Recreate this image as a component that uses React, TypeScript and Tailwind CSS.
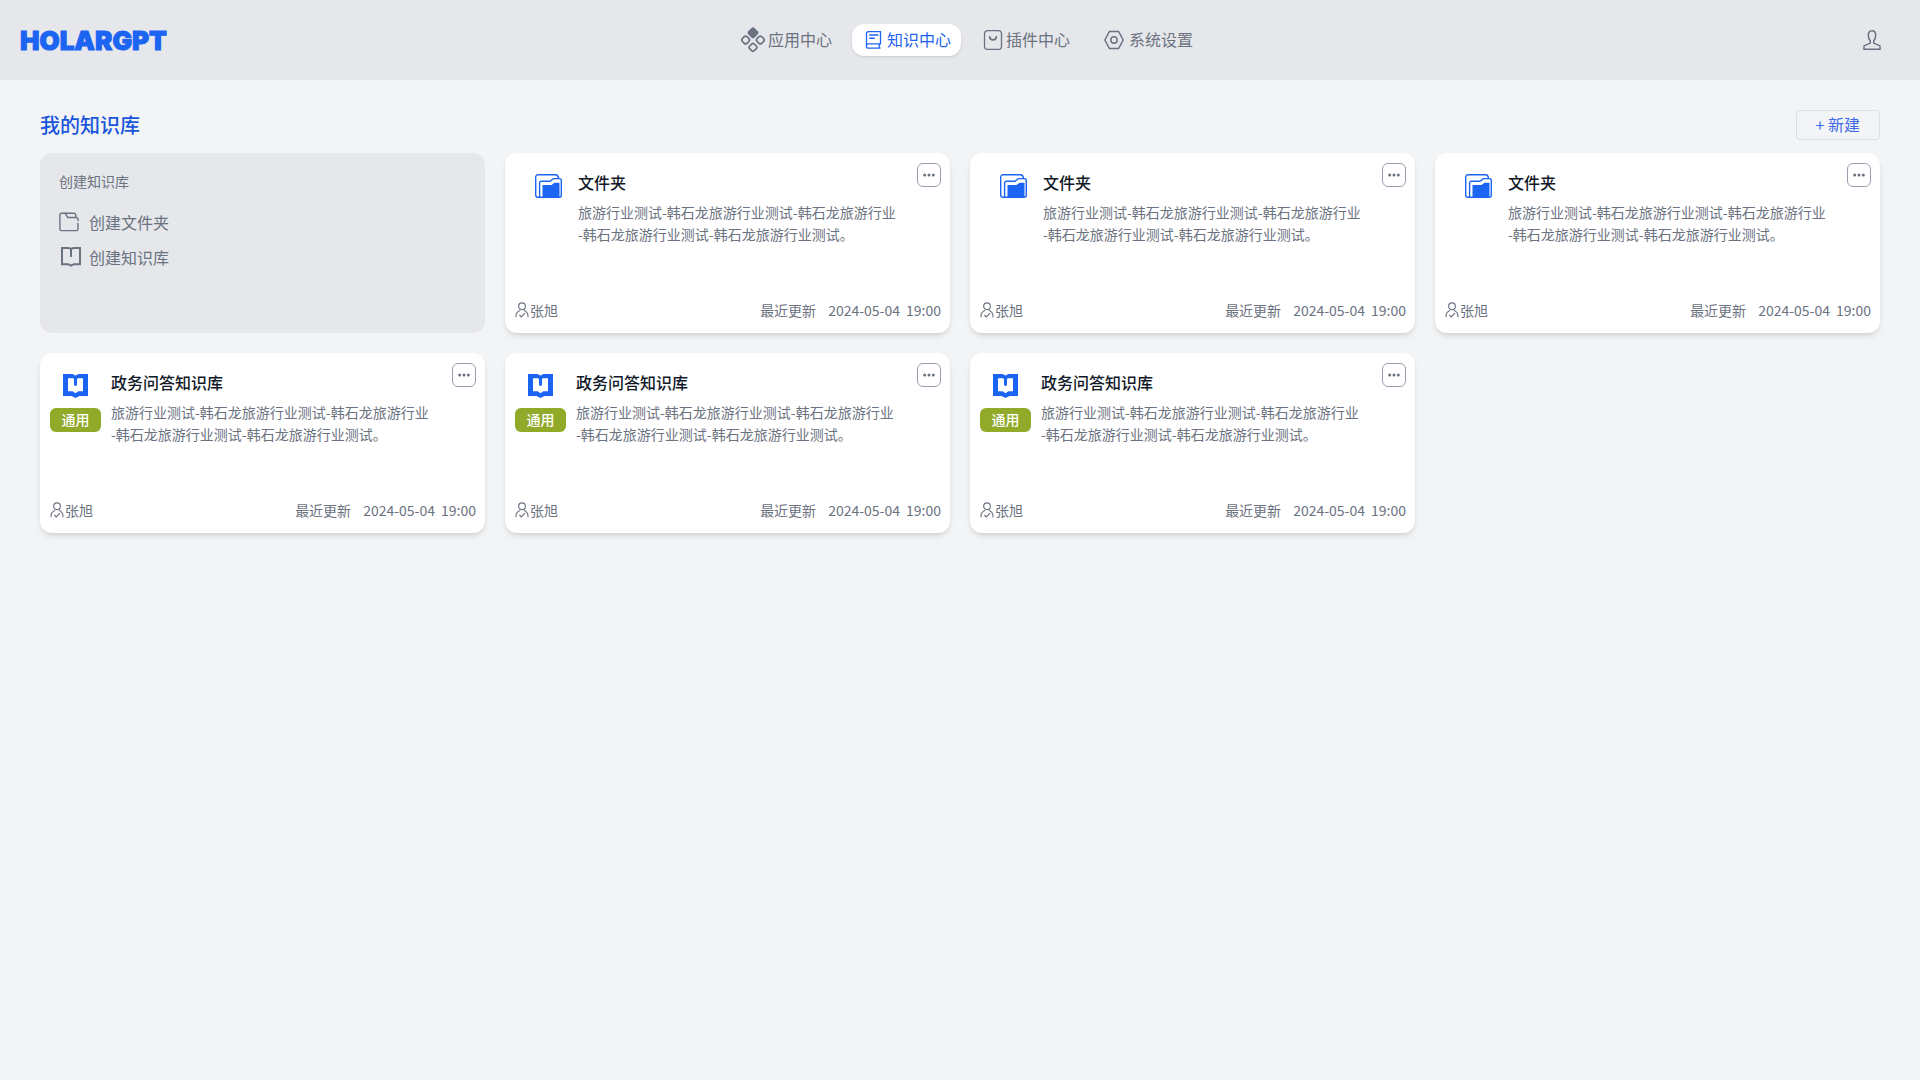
import React from "react";

type IconProps = { className?: string };

const DESC_LINES = [
  "旅游行业测试-韩石龙旅游行业测试-韩石龙旅游行业",
  "-韩石龙旅游行业测试-韩石龙旅游行业测试。",
];

const AppsIcon = ({ className }: IconProps) => (
  <svg viewBox="0 0 24 24" fill="none" stroke="currentColor" strokeWidth="1.4" className={className}>
    <rect x="8.9" y="2.7" width="6.2" height="6.2" rx="1" transform="rotate(45 12 5.8)" fill="currentColor" />
    <rect x="2.9" y="9.2" width="5.6" height="5.6" rx="1.6" transform="rotate(45 5.7 12)" />
    <rect x="15.5" y="9.2" width="5.6" height="5.6" rx="1.6" transform="rotate(45 18.3 12)" />
    <rect x="9.2" y="15.5" width="5.6" height="5.6" rx="1.6" transform="rotate(45 12 18.3)" />
  </svg>
);

const NotebookIcon = ({ className }: IconProps) => (
  <svg viewBox="0 0 24 24" fill="none" stroke="currentColor" strokeWidth="1.3" className={className}>
    <path d="M18.5 15.9V3.7H6.2a1.7 1.7 0 0 0-1.7 1.7v13.3a1.4 1.4 0 0 0 1.4 1.4h12.6" />
    <path d="M19 15.9H6a1.7 1.7 0 0 0-1.5 1.8M18 15.9a2.8 2.8 0 0 0 0 4.2" />
    <path d="M7.3 7h9.2M7.3 10.3h5.5" strokeWidth="1.5" />
  </svg>
);

const PluginIcon = ({ className }: IconProps) => (
  <svg viewBox="0 0 24 24" fill="none" stroke="currentColor" strokeWidth="1.3" className={className}>
    <rect x="3.5" y="2.6" width="17" height="18.8" rx="3.2" />
    <path d="M8.7 8.8c.3 4.2 6.3 4.2 6.6 0" strokeWidth="1.7" strokeLinecap="round" />
  </svg>
);

const HexIcon = ({ className }: IconProps) => (
  <svg viewBox="0 0 24 24" fill="none" stroke="currentColor" strokeWidth="1.5" className={className}>
    <path d="M7.3 3.6h9.4L21.2 12l-4.5 8.4H7.3L2.8 12z" strokeLinejoin="round" />
    <circle cx="12" cy="12" r="3.2" />
  </svg>
);

const UserIcon = ({ className }: IconProps) => (
  <svg viewBox="0 0 20 22" fill="none" stroke="currentColor" strokeWidth="1.5" className={className}>
    <path d="M10 1.7c-2.6 0-3.7 1.8-3.7 4.4 0 2.4.5 4.2 2 6v2L2 16.9v3.4h16v-3.4l-6.3-2.8v-2c1.5-1.8 2-3.6 2-6 0-2.6-1.1-4.4-3.7-4.4z" />
  </svg>
);

const FolderLineIcon = ({ className }: IconProps) => (
  <svg viewBox="0 0 20 20" fill="none" stroke="currentColor" strokeWidth="1.4" className={className}>
    <path d="M19 10.8v6.1a1.7 1.7 0 0 1-1.7 1.7H2.6a1.7 1.7 0 0 1-1.7-1.7V3a1.7 1.7 0 0 1 1.7-1.7h3.7l2.3 4.2h8.7A1.7 1.7 0 0 1 19 7.2v1.7" />
    <path d="M6.3 1.3h8.5a2 2 0 0 1 2 2v2.2" />
  </svg>
);

const BookLineIcon = ({ className }: IconProps) => (
  <svg viewBox="0 0 20 20" fill="none" stroke="currentColor" strokeWidth="2" className={className}>
    <path d="M1 1h6.2c1.4 0 2.4.6 2.8 1.5.4-.9 1.4-1.5 2.8-1.5H19v16.2h-6.2L10 18.7l-2.8-1.5H1z" />
    <path d="M10 2.4V10" />
  </svg>
);

const FolderIcon = ({ className }: IconProps) => (
  <svg viewBox="0 0 27 24" fill="none" stroke="currentColor" strokeWidth="1.4" className={className}>
    <path d="M4.5 23.3H3A2.3 2.3 0 0 1 .7 21V3A2.3 2.3 0 0 1 3 .7h17.7c1.7 0 2.5 1.3 2.8 3.5" />
    <path d="M4.6 23.3V9a1.8 1.8 0 0 1 1.8-1.8h8.4l3.7-2.6h5.8a2 2 0 0 1 2 2v14.7a2 2 0 0 1-2 2H4.6z" />
    <path d="M7.5 23.5V11h9l3-2.2h5v14.7z" fill="currentColor" stroke="none" />
  </svg>
);

const BookIcon = ({ className }: IconProps) => (
  <svg viewBox="0 0 25 24" className={className}>
    <path d="M0 0h9.5l3 1.5 3-1.500H25v22h-8.500l-4 2-4-2H0z" fill="currentColor" />
    <path d="M5 4.3h4.2c1 0 1.8.5 1.8 1.4h3c0-.9.8-1.4 1.8-1.4H20v13h-4.7l-2.800 2-2.800-2H5z" fill="white" />
    <path d="M11 4.3h3v6.500c0 1.500-3 1.500-3 0z" fill="currentColor" />
  </svg>
);

const OwnerIcon = ({ className }: IconProps) => (
  <svg viewBox="0 0 14 17" fill="none" stroke="currentColor" strokeWidth="1.2" className={className}>
    <circle cx="7" cy="4.5" r="3.6" />
    <path d="M.7 16.3v-2.2c0-2.2 1.6-4 4.3-5.3M9 8.8c2.7 1.3 4.3 3.1 4.3 5.3v2.2M4.2 13.8l2 2 4-4" />
  </svg>
);

const navItems = [
  { label: "应用中心", Icon: AppsIcon, iconClass: "w-7 h-7", active: false },
  { label: "知识中心", Icon: NotebookIcon, iconClass: "w-6 h-6", active: true },
  { label: "插件中心", Icon: PluginIcon, iconClass: "w-6 h-6", active: false },
  { label: "系统设置", Icon: HexIcon, iconClass: "w-7 h-6", active: false },
];

const cards = [
  { id: 1, kind: "folder", title: "文件夹" },
  { id: 2, kind: "folder", title: "文件夹" },
  { id: 3, kind: "folder", title: "文件夹" },
  { id: 4, kind: "base", title: "政务问答知识库" },
  { id: 5, kind: "base", title: "政务问答知识库" },
  { id: 6, kind: "base", title: "政务问答知识库" },
];

function Header() {
  return (
    <header className="grid grid-cols-[1fr_auto_1fr] items-center h-20 pl-5 pr-2 bg-gray-200">
      <a
        href="#"
        className="justify-self-start pt-0.5 font-['Inter',sans-serif] font-black text-[26px] leading-8 text-[#1c64f2] [-webkit-text-stroke:1px_#1c64f2]"
      >
        HOLARGPT
      </a>
      <nav className="flex items-center gap-2.5">
        {navItems.map(({ label, Icon, iconClass, active }) => (
          <a
            key={label}
            href="#"
            className={`flex items-center gap-px h-8 px-2.5 rounded-xl text-base ${
              active ? "bg-white text-[#1c64f2] shadow-sm" : "text-[#6b7280]"
            }`}
          >
            <Icon className={iconClass} />
            <span className="pb-0.5">{label}</span>
          </a>
        ))}
      </nav>
      <button type="button" aria-label="用户" className="justify-self-end mr-[30px] text-[#6b7280] cursor-pointer">
        <UserIcon className="w-5 h-6" />
      </button>
    </header>
  );
}

function CreateCard() {
  return (
    <div className="min-h-45 px-[19px] pt-[18px] rounded-xl bg-gray-200 text-[#6b7280]">
      <h2 className="text-sm leading-5">创建知识库</h2>
      <div className="flex flex-col items-start gap-[11px] mt-[19px]">
        <button type="button" className="flex items-center gap-2.5 text-base cursor-pointer">
          <FolderLineIcon className="w-5 h-5" />
          <span>创建文件夹</span>
        </button>
        <button type="button" className="flex items-center gap-2 text-base cursor-pointer">
          <BookLineIcon className="w-5 h-5 ml-0.5" />
          <span>创建知识库</span>
        </button>
      </div>
    </div>
  );
}

function KnowledgeCard({ kind, title }: { kind: string; title: string }) {
  return (
    <article className="flex flex-col justify-between min-h-45 pl-2.5 pr-[9px] pt-2.5 pb-[13px] rounded-xl bg-white shadow-md text-[#6b7280]">
      <div className="flex items-start">
        {kind === "folder" ? (
          <div className="w-[63px] shrink-0 pl-5 pt-[11px] text-[#1c64f2]">
            <FolderIcon className="w-[27px] h-6" />
          </div>
        ) : (
          <div className="w-[61px] shrink-0 pt-[11px] text-[#1c64f2]">
            <div className="flex flex-col items-center gap-2.5 w-[51px]">
              <BookIcon className="w-[25px] h-6" />
              <span className="w-full h-6 rounded-md bg-[#91aa2a] text-center text-sm leading-[22px] font-medium text-white">
                通用
              </span>
            </div>
          </div>
        )}
        <div className="flex-1 pt-[7px]">
          <h3 className="text-base font-medium text-[#111928]">{title}</h3>
          <p className="mt-[7px] text-sm leading-[22px]">
            {DESC_LINES[0]}
            <br />
            {DESC_LINES[1]}
          </p>
        </div>
        <button
          type="button"
          aria-label="更多"
          className="flex items-center justify-center w-6 h-6 shrink-0 rounded-md border border-gray-400 cursor-pointer"
        >
          <svg viewBox="0 0 12 4" fill="currentColor" className="w-3 h-1">
            <circle cx="1.7" cy="2" r="1.5" />
            <circle cx="6" cy="2" r="1.5" />
            <circle cx="10.3" cy="2" r="1.5" />
          </svg>
        </button>
      </div>

      <div className="flex items-center justify-between text-sm">
        <div className="flex items-center gap-px">
          <OwnerIcon className="w-3.5 h-4" />
          <span>张旭</span>
        </div>
        <div className="flex items-center">
          <span className="mr-3">最近更新</span>
          <span className="mr-1.5">2024-05-04</span>
          <span>19:00</span>
        </div>
      </div>
    </article>
  );
}

export default function App() {
  return (
    <div className="min-h-screen bg-gray-100 font-['Noto_Sans_CJK_SC',sans-serif]">
      <Header />

      <main className="px-10 pt-[30px] pb-10">
        {/* Title */}
        <div className="flex items-center justify-between mb-[13px]">
          <h1 className="text-xl leading-7 font-medium text-[#1a56db]">我的知识库</h1>
          <button
            type="button"
            className="h-[30px] px-[19px] pb-0.5 rounded-sm border border-[#dcdfe3] text-base leading-6 text-[#4169e8] cursor-pointer"
          >
            + 新建
          </button>
        </div>

        <div className="grid grid-cols-4 gap-5">
          <CreateCard />
          {cards.map((card) => (
            <KnowledgeCard key={card.id} kind={card.kind} title={card.title} />
          ))}
        </div>
      </main>
    </div>
  );
}
